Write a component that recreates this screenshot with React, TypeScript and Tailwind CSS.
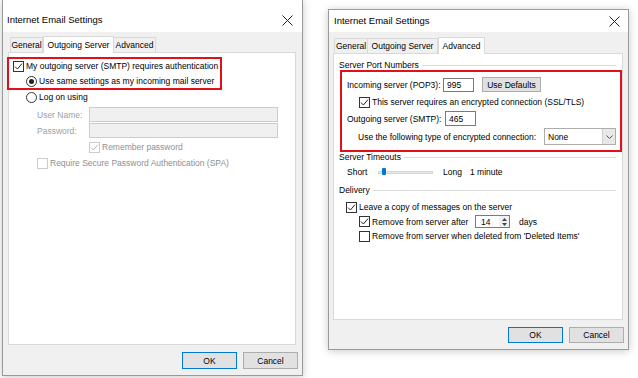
import React from "react";

function CloseX() {
  return (
    <svg width="11" height="11" viewBox="0 0 11 11" className="shrink-0">
      <path d="M0.5 0.5 L10.5 10.5 M10.5 0.5 L0.5 10.5" stroke="#222" strokeWidth="1" fill="none" />
    </svg>
  );
}

function CheckBox({ checked = false, disabled = false }: { checked?: boolean; disabled?: boolean }) {
  return (
    <span
      className={
        disabled
          ? "w-[11px] h-[11px] border border-[#cccccc] bg-white inline-flex items-center justify-center shrink-0"
          : "w-[11px] h-[11px] border border-[#333333] bg-white inline-flex items-center justify-center shrink-0"
      }
    >
      {checked && (
        <svg width="9" height="9" viewBox="0 0 9 9">
          <path d="M1 4.6 L3.4 7 L8 1.6" fill="none" stroke={disabled ? "#b8b8b8" : "#222"} strokeWidth="1" />
        </svg>
      )}
    </span>
  );
}

function Radio({ checked = false }: { checked?: boolean }) {
  return (
    <span className="w-[11px] h-[11px] rounded-full border border-[#333333] bg-white inline-flex items-center justify-center shrink-0">
      {checked && <span className="w-[5px] h-[5px] rounded-full bg-[#222]" />}
    </span>
  );
}

function Group({ label }: { label: string }) {
  return (
    <div className="h-[12px] flex items-center gap-[3px] pl-[5px] pr-[6px]">
      <span>{label}</span>
      <div className="flex-1 h-px bg-[#dcdcdc]" />
    </div>
  );
}

function Btn({ label, primary = false }: { label: string; primary?: boolean }) {
  return (
    <div
      className={
        primary
          ? "w-[55px] h-full border border-[#0078d7] bg-[#e1e1e1] flex items-center justify-center"
          : "w-[55px] h-full border border-[#adadad] bg-[#e1e1e1] flex items-center justify-center"
      }
    >
      {label}
    </div>
  );
}

function LeftDialog() {
  return (
    <div className="w-[301px] h-[376px] border border-t-0 border-[#9a9a9a] bg-[#f0f0f0] flex flex-col relative shadow-[0_1px_8px_rgba(0,0,0,0.22)] shrink-0">
      <div className="h-[32px] pt-[8px] bg-white flex items-center justify-between pl-[4px] pr-[9px]">
        <span className="text-[9.5px]">Internet Email Settings</span>
        <CloseX />
      </div>
      <div className="flex-1 flex flex-col pt-[4px] pl-[5px] pr-[6px]">
        <div className="h-[16px] flex items-end pl-[2px]">
          <div className="h-[15px] w-[33px] border border-b-0 border-[#d9d9d9] bg-[#f0f0f0] flex items-center justify-center">General</div>
          <div className="h-[17px] w-[71px] border border-b-0 border-[#d9d9d9] bg-white relative z-10 -mb-px flex items-center justify-center pb-[1px]">Outgoing Server</div>
          <div className="h-[15px] w-[42px] border border-b-0 border-l-0 border-[#d9d9d9] bg-[#f0f0f0] flex items-center justify-center">Advanced</div>
        </div>
        <div className="h-[293px] bg-white border border-[#d9d9d9] flex flex-col pt-[7px] pl-[4px]">
          <div className="h-[12px] flex items-center gap-[2px]">
            <CheckBox checked />
            <span>My outgoing server (SMTP) requires authentication</span>
          </div>
          <div className="mt-[3px] h-[12px] ml-[13px] flex items-center gap-[2px]">
            <Radio checked />
            <span>Use same settings as my incoming mail server</span>
          </div>
          <div className="mt-[4px] h-[12px] ml-[13px] flex items-center gap-[2px]">
            <Radio />
            <span>Log on using</span>
          </div>
          <div className="mt-[4px] h-[15px] ml-[24px] flex items-center text-[#a0a0a0]">
            <span className="w-[52px]">User Name:</span>
            <div className="w-[189px] h-[15px] border border-[#cccccc] bg-[#f0f0f0]" />
          </div>
          <div className="mt-[1px] h-[15px] ml-[24px] flex items-center text-[#a0a0a0]">
            <span className="w-[52px]">Password:</span>
            <div className="w-[189px] h-[15px] border border-[#cccccc] bg-[#f0f0f0]" />
          </div>
          <div className="mt-[3px] h-[12px] ml-[76px] flex items-center gap-[2px] text-[#8f8f8f]">
            <CheckBox checked disabled />
            <span>Remember password</span>
          </div>
          <div className="mt-[4px] h-[12px] ml-[24px] flex items-center gap-[2px] text-[#8f8f8f]">
            <CheckBox disabled />
            <span>Require Secure Password Authentication (SPA)</span>
          </div>
        </div>
        <div className="mt-[7px] h-[17px] flex justify-end gap-[6px] -mr-[2px]">
          <Btn label="OK" primary />
          <Btn label="Cancel" />
        </div>
      </div>
      <div className="absolute left-[4px] top-[57px] w-[215px] h-[33px] border-2 border-[#e3101c] pointer-events-none" />
    </div>
  );
}

function RightDialog() {
  return (
    <div className="mt-[9px] w-[301px] h-[341px] border border-[#9a9a9a] bg-[#f0f0f0] flex flex-col relative shadow-[0_1px_8px_rgba(0,0,0,0.22)] shrink-0">
      <div className="h-[22px] bg-white flex items-center justify-between pl-[5px] pr-[8px]">
        <span className="text-[9.5px]">Internet Email Settings</span>
        <CloseX />
      </div>
      <div className="flex-1 flex flex-col pt-[5px] pl-[4px] pr-[5px]">
        <div className="h-[16px] flex items-end pl-[1px]">
          <div className="h-[15px] w-[34px] border border-b-0 border-[#d9d9d9] bg-[#f0f0f0] flex items-center justify-center">General</div>
          <div className="h-[15px] w-[70px] border border-b-0 border-l-0 border-[#d9d9d9] bg-[#f0f0f0] flex items-center justify-center">Outgoing Server</div>
          <div className="h-[17px] w-[47px] border border-b-0 border-[#d9d9d9] bg-white relative z-10 -mb-px flex items-center justify-center pb-[1px]">Advanced</div>
        </div>
        <div className="h-[267px] bg-white border border-[#d9d9d9] flex flex-col pt-[5px]">
          <Group label="Server Port Numbers" />
          <div className="mt-[6px] h-[15px] pl-[13px] flex items-center">
            <span className="w-[96px]">Incoming server (POP3):</span>
            <div className="w-[31px] h-[14px] border border-[#7a7a7a] flex items-center pl-[3px]">995</div>
            <div className="ml-[8px] w-[59px] h-[15px] border border-[#adadad] bg-[#e1e1e1] flex items-center justify-center">Use Defaults</div>
          </div>
          <div className="mt-[4px] h-[12px] pl-[25px] flex items-center gap-[2px]">
            <CheckBox checked />
            <span>This server requires an encrypted connection (SSL/TLS)</span>
          </div>
          <div className="mt-[3px] h-[15px] pl-[13px] flex items-center">
            <span className="w-[98px]">Outgoing server (SMTP):</span>
            <div className="w-[31px] h-[15px] border border-[#7a7a7a] flex items-center pl-[3px]">465</div>
          </div>
          <div className="mt-[2px] h-[17px] pl-[24px] flex items-center">
            <span className="w-[186px]">Use the following type of encrypted connection:</span>
            <div className="w-[72px] h-[17px] border border-[#adadad] bg-white flex items-stretch">
              <span className="flex-1 flex items-center pl-[3px]">None</span>
              <span className="w-[13px] bg-[#e8e8e8] border-l border-[#d0d0d0] flex items-center justify-center">
                <svg width="7" height="4" viewBox="0 0 7 4">
                  <path d="M0.5 0.5 L3.5 3.5 L6.5 0.5" fill="none" stroke="#555" strokeWidth="1" />
                </svg>
              </span>
            </div>
          </div>
          <div className="mt-[6px]">
            <Group label="Server Timeouts" />
          </div>
          <div className="mt-[3px] h-[12px] pl-[13px] flex items-center">
            <span className="w-[31px]">Short</span>
            <div className="w-[55px] h-[12px] relative">
              <div className="absolute left-0 right-0 top-[5px] h-[3px] bg-[#e7e7e7] border border-[#d6d6d6]" />
              <div className="absolute left-[4px] top-[2px] w-[4px] h-[7px] rounded-[1px] bg-[#0078d7]" />
            </div>
            <span className="ml-[10px] w-[27px]">Long</span>
            <span>1 minute</span>
          </div>
          <div className="mt-[6px]">
            <Group label="Delivery" />
          </div>
          <div className="mt-[5px] h-[12px] pl-[12px] flex items-center gap-[2px]">
            <CheckBox checked />
            <span>Leave a copy of messages on the server</span>
          </div>
          <div className="mt-[2px] h-[13px] pl-[25px] flex items-center">
            <CheckBox checked />
            <span className="ml-[2px] w-[103px]">Remove from server after</span>
            <div className="w-[35px] h-[13px] border border-[#7a7a7a] flex items-stretch">
              <span className="flex-1 flex items-center pl-[5px]">14</span>
              <span className="w-[10px] flex flex-col items-center justify-center gap-[2px] bg-[#f0f0f0]">
                <svg width="5" height="3" viewBox="0 0 5 3">
                  <path d="M0 3 L2.5 0 L5 3 Z" fill="#444" />
                </svg>
                <svg width="5" height="3" viewBox="0 0 5 3">
                  <path d="M0 0 L2.5 3 L5 0 Z" fill="#444" />
                </svg>
              </span>
            </div>
            <span className="ml-[9px]">days</span>
          </div>
          <div className="mt-[2px] h-[12px] pl-[25px] flex items-center gap-[2px]">
            <CheckBox />
            <span>Remove from server when deleted from 'Deleted Items'</span>
          </div>
        </div>
        <div className="mt-[7px] h-[16px] flex justify-end gap-[6px] -mr-px">
          <Btn label="OK" primary />
          <Btn label="Cancel" />
        </div>
      </div>
      <div className="absolute left-[11px] top-[60px] w-[282px] h-[82px] border-2 border-[#e3101c] pointer-events-none" />
    </div>
  );
}

export default function App() {
  return (
    <div className="w-[638px] h-[378px] bg-white overflow-hidden flex items-start pl-[2px] gap-[25px] text-[8.5px] leading-[12px] text-black [font-family:'Liberation_Sans',Arial,sans-serif]">
      <LeftDialog />
      <RightDialog />
    </div>
  );
}
